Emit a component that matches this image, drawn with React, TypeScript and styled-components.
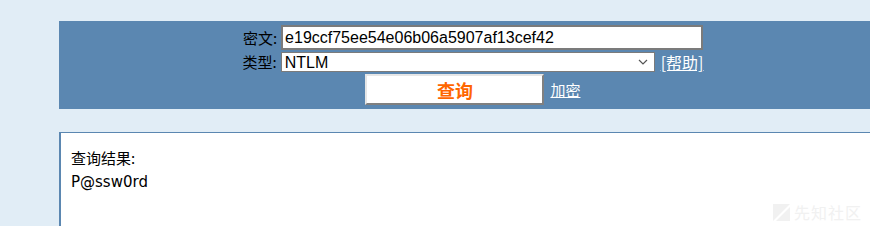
import styled, { createGlobalStyle } from 'styled-components'

const Global = createGlobalStyle`
  html, body {
    margin: 0;
    padding: 0;
    overflow: hidden;
    background: #e1edf6;
  }
  body {
    font-family: "Liberation Sans", "Noto Sans CJK SC", sans-serif;
    font-size: 14px;
    color: #000;
  }
`

const Page = styled.div`
  padding: 21px 0 0 59px;
  width: 828px;
`

const QueryPanel = styled.form`
  background: #5b87b1;
  height: 88px;
  box-sizing: border-box;
  padding-top: 4px;
  display: flex;
  flex-direction: column;
  align-items: center;
  gap: 2px;
`

const Row = styled.div`
  display: flex;
  align-items: center;
`

const Label = styled.label`
  font-family: "Noto Sans CJK SC", sans-serif;
  font-size: 15px;
  line-height: 20px;
  margin-right: 4px;
  flex-shrink: 0;
`

const HashInput = styled.input`
  box-sizing: border-box;
  width: 422px;
  height: 25px;
  border: 2px solid #7b7b7b;
  padding: 0 2px;
  font-family: "Liberation Sans", sans-serif;
  font-size: 16px;
  background: #fff;
  color: #000;
  outline: none;
`

const SelectWrap = styled.div`
  position: relative;
  width: 374px;
  height: 20px;
  box-sizing: border-box;
  border: 1px solid #7b7b7b;
  background: #fff;
  display: flex;
  align-items: center;
`

const Select = styled.select`
  appearance: none;
  border: none;
  background: transparent;
  width: 100%;
  height: 100%;
  padding: 0 3px;
  font-family: "Liberation Sans", sans-serif;
  font-size: 16px;
  color: #000;
  outline: none;
`

const Chevron = styled.svg`
  position: absolute;
  right: 6px;
  top: 6px;
  pointer-events: none;
`

const Link = styled.a<{ $size?: number }>`
  font-family: "Noto Sans CJK SC", sans-serif;
  font-size: ${p => p.$size ?? 15}px;
  line-height: 20px;
  color: #fff;
  text-decoration: underline;
  margin-left: 6px;
`

const SubmitButton = styled.button`
  box-sizing: border-box;
  width: 179px;
  height: 31px;
  background: #fff;
  border: 2px solid;
  border-color: #e6e6e6 #808080 #808080 #e6e6e6;
  font-family: "Noto Sans CJK SC", sans-serif;
  font-weight: bold;
  font-size: 18px;
  color: #ff6600;
  padding: 0;
  cursor: pointer;
`

const ResultBox = styled.div`
  margin-top: 23px;
  background: #fff;
  border-top: 1px solid #5b87b1;
  border-left: 2px solid #5b87b1;
  height: 100px;
  box-sizing: border-box;
  padding: 13px 0 0 10px;
  position: relative;
  line-height: 23px;
`

const ResultTitle = styled.div`
  font-family: "Noto Sans CJK SC", sans-serif;
  font-size: 15px;
`

const ResultValue = styled.div`
  font-family: "DejaVu Sans", sans-serif;
  font-size: 15px;
  margin-top: 2px;
`

const Watermark = styled.div`
  position: absolute;
  left: 712px;
  top: 71px;
  display: flex;
  align-items: center;
  gap: 4px;
  color: #f1f1f1;
  font-family: "Noto Sans CJK SC", sans-serif;
  font-size: 16px;
  line-height: 17px;
  letter-spacing: 1px;
`

export default function App() {
  return (
    <>
      <Global />
      <Page>
        <QueryPanel onSubmit={e => e.preventDefault()}>
          <Row>
            <Label>密文:</Label>
            <HashInput defaultValue="e19ccf75ee54e06b06a5907af13cef42" />
          </Row>
          <Row>
            <Label>类型:</Label>
            <SelectWrap>
              <Select defaultValue="NTLM">
                <option>NTLM</option>
                <option>MD5</option>
                <option>SHA1</option>
              </Select>
              <Chevron width="10" height="6" viewBox="0 0 10 6">
                <path d="M1 1l4 4 4-4" fill="none" stroke="#555" strokeWidth="1.2" />
              </Chevron>
            </SelectWrap>
            <Link href="#" $size={16}>[帮助]</Link>
          </Row>
          <Row>
            <SubmitButton type="submit">查询</SubmitButton>
            <Link href="#">加密</Link>
          </Row>
        </QueryPanel>
        <ResultBox>
          <ResultTitle>查询结果:</ResultTitle>
          <ResultValue>P@ssw0rd</ResultValue>
          <Watermark>
            <svg width="17" height="17" viewBox="0 0 17 17">
              <path d="M0 0h17L0 17z" fill="#f1f1f1" />
              <path d="M17 3v14H3z" fill="#f1f1f1" />
            </svg>
            先知社区
          </Watermark>
        </ResultBox>
      </Page>
    </>
  )
}
